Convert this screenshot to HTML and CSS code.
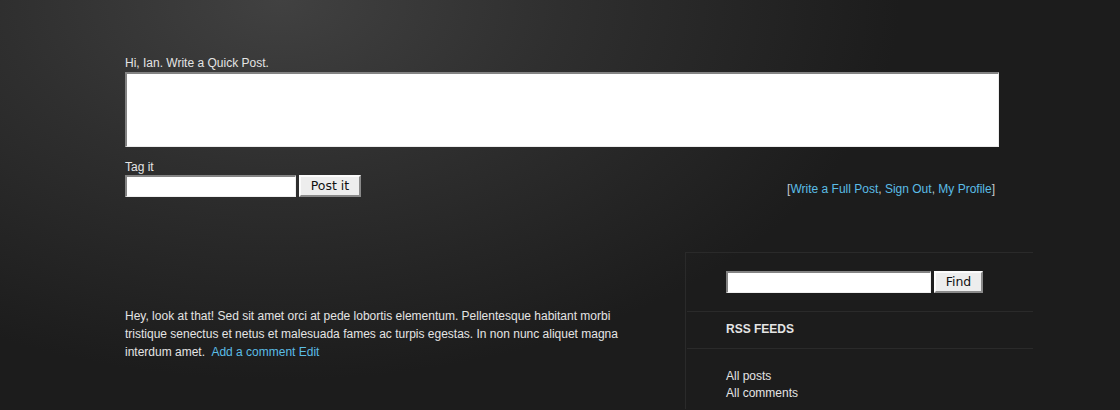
FILE: index.html
```html
<!DOCTYPE html>
<html>
<head>
<meta charset="utf-8">
<link rel="stylesheet" href="styles.css">
</head>
<body>
<div class="page">
  <form class="quick">
    <label class="quick-label">Hi, Ian. Write a Quick Post.</label>
    <textarea class="quick-text"></textarea>
    <div class="quick-row">
      <div class="tag">
        <label class="tag-label">Tag it</label>
        <div class="tag-controls">
          <input class="field tag-input" type="text">
          <button class="btn post-btn" type="button">Post it</button>
        </div>
      </div>
      <div class="user-links">[<a href="#">Write a Full Post</a>, <a href="#">Sign Out</a>, <a href="#">My Profile</a>]</div>
    </div>
  </form>
  <div class="main">
    <div class="post">
      <p>Hey, look at that! Sed sit amet orci at pede lobortis elementum. Pellentesque habitant morbi tristique senectus et netus et malesuada fames ac turpis egestas. In non nunc aliquet magna interdum amet. <a class="post-links" href="#">Add a comment Edit</a></p>
    </div>
    <aside class="sidebar">
      <div class="side-section search">
        <input class="field search-input" type="text">
        <button class="btn find-btn" type="button">Find</button>
      </div>
      <div class="side-section side-title">RSS FEEDS</div>
      <ul class="side-list">
        <li>All posts</li>
        <li>All comments</li>
      </ul>
    </aside>
  </div>
</div>
</body>
</html>
```
FILE: styles.css
```css
html, body {
  margin: 0;
  padding: 0;
  height: 100%;
}
body {
  background: #1c1c1c radial-gradient(ellipse 620px 380px at 280px 0px, #414141 0%, #2f2f2f 45%, #1c1c1c 100%) no-repeat;
  font-family: "Liberation Sans", Arial, sans-serif;
  font-size: 12px;
  color: #e4e4e4;
  overflow: hidden;
}
a {
  color: #5bbde6;
  text-decoration: none;
}
.page {
  padding: 56px 0 0 125px;
}
.quick {
  width: 874px;
  margin: 0;
}
.quick-label {
  display: block;
  line-height: 15px;
  height: 16px;
}
.quick-text {
  display: block;
  box-sizing: border-box;
  width: 874px;
  height: 75px;
  margin: 0;
  background: #fff;
  border-style: solid;
  border-width: 2px 1px 1px 2px;
  border-color: #838383 #ececec #ececec #838383;
  resize: none;
  outline: none;
}
.quick-row {
  display: flex;
  justify-content: space-between;
  align-items: flex-end;
  margin-top: 13px;
}
.tag-label {
  display: block;
  line-height: 15px;
  height: 15px;
}
.tag-controls {
  display: flex;
  gap: 3px;
}
.field {
  box-sizing: border-box;
  height: 22px;
  margin: 0;
  padding: 0 3px;
  background: #fff;
  border-style: solid;
  border-width: 2px 1px 1px 2px;
  border-color: #838383 #f0f0f0 #f0f0f0 #838383;
  outline: none;
}
.tag-input {
  width: 171px;
}
.btn {
  box-sizing: border-box;
  height: 22px;
  margin: 0;
  padding: 0;
  background: #ededed;
  border-style: solid;
  border-width: 2px;
  border-color: #fbfbfb #8a8a8a #8a8a8a #fbfbfb;
  font-family: "DejaVu Sans", sans-serif;
  font-size: 12.5px;
  color: #111;
  line-height: 16px;
}
.post-btn {
  width: 62px;
}
.user-links {
  color: #c8c8c8;
  line-height: 15px;
  margin-right: 4px;
  margin-bottom: 0;
}
.main {
  display: flex;
  align-items: flex-start;
  margin-top: 55px;
}
.post {
  width: 505px;
  padding-top: 55px;
}
.post p {
  margin: 0;
  line-height: 18px;
}
.post-links {
  margin-left: 3px;
}
.sidebar {
  margin-left: 55px;
  width: 347px;
  min-height: 156px;
  border-top: 1px solid #2a2a2a;
  border-left: 1px solid #2a2a2a;
}
.side-section {
  margin-left: 1px;
  border-bottom: 1px solid #2a2a2a;
}
.search {
  display: flex;
  gap: 3px;
  padding: 18px 0 18px 39px;
}
.search-input {
  width: 205px;
}
.find-btn {
  width: 49px;
}
.side-title {
  font-weight: bold;
  line-height: 15px;
  padding: 10px 0 11px 39px;
}
.side-list {
  list-style: none;
  margin: 0;
  padding: 19px 0 0 40px;
}
.side-list li {
  line-height: 17px;
}
```
